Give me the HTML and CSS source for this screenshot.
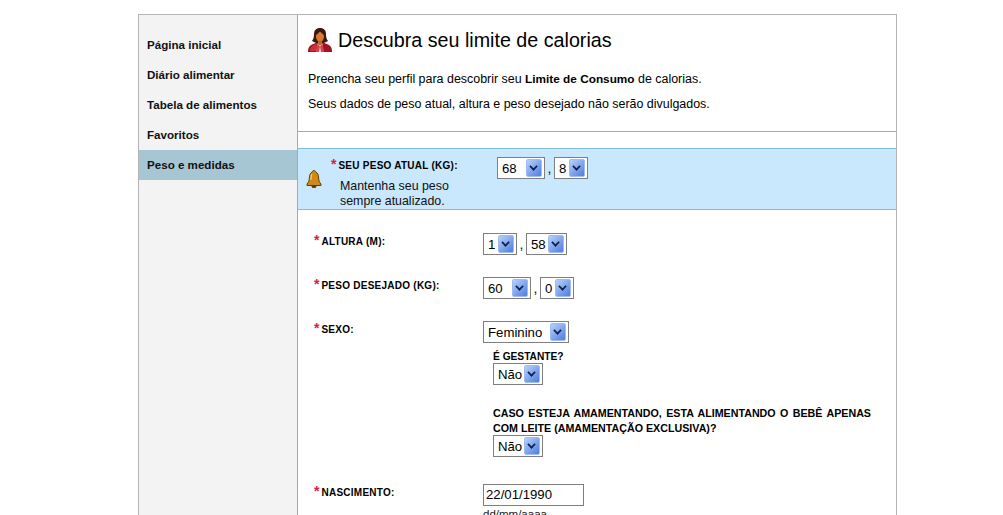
FILE: index.html
```html
<!DOCTYPE html>
<html lang="pt">
<head>
<meta charset="utf-8">
<title>Descubra seu limite de calorias</title>
<link rel="stylesheet" href="styles.css">
</head>
<body>
<div class="page">
  <nav class="side">
    <a class="item">Página inicial</a>
    <a class="item">Diário alimentar</a>
    <a class="item">Tabela de alimentos</a>
    <a class="item">Favoritos</a>
    <a class="item active">Peso e medidas</a>
  </nav>
  <main class="main">
    <header class="intro">
      <h1 class="title">
        <svg class="person" viewBox="0 0 24 24" width="24" height="24"><path d="M0 24c0-4 1-6 4-7.500l5-2h6l5 2c3 1.500 4 3.500 4 7.500z" fill="#a3141c"/><path d="M2 23c0-3 1-5 4-6l3-1 1 7z" fill="#c9303a"/><path d="M9.500 15.500h5l1 8.500h-7z" fill="#f1e4e0"/><path d="M9.500 15.500l2.500 3-1 5.500H8zM14.500 15.500L12 18.500l1 5.500h3z" fill="#d4434c"/><path d="M12 0C8 0 6 2.500 6 6c0 3-.5 5-2 7l4 2h8l4-2c-1.500-2-2-4-2-7 0-3.500-2-6-6-6z" fill="#3f1710"/><ellipse cx="12" cy="8.500" rx="4" ry="5.200" fill="#d77a32"/><path d="M10 12.500h4v3.500l-2 1.500-2-1.500z" fill="#bd6526"/><path d="M8 7c1.500-1 3-2.500 4-3.500 1 1 2.500 2.500 4 3.500l-.5-4h-7z" fill="#3f1710"/></svg>
        <span>Descubra seu limite de calorias</span>
      </h1>
      <p class="text">Preencha seu perfil para descobrir seu <b>Limite de Consumo</b> de calorias.</p>
      <p class="text">Seus dados de peso atual, altura e peso desejado não serão divulgados.</p>
    </header>
    <section class="band">
      <svg class="bell" viewBox="0 0 16 18" width="16" height="18"><path d="M8 .5c1 0 1.600.7 1.600 1.500C12 3 12.400 5 12.600 8c.2 3 1 4.500 2.400 6v1.500H1V14c1.400-1.500 2.200-3 2.400-6 .2-3 .6-5 3-6C6.400 1.200 7 .5 8 .5z" fill="#cf8a16" stroke="#5f3f06" stroke-width="1"/><path d="M6 4c-1 1-1 4-1.300 6" stroke="#f2cf6c" stroke-width="1.400" fill="none"/><ellipse cx="8" cy="16.500" rx="2.500" ry="1.500" fill="#5a3a08"/></svg>
      <div class="band-label">
        <div class="label"><span class="star">*</span>SEU PESO ATUAL (KG):</div>
        <div class="note">Mantenha seu peso<br>sempre atualizado.</div>
      </div>
      <div class="controls">
        <span class="select w48"><span class="val">68</span><i class="arrow"></i></span>
        <span class="comma">,</span>
        <span class="select w34"><span class="val">8</span><i class="arrow"></i></span>
      </div>
    </section>
    <form class="form">
      <div class="row">
        <div class="label"><span class="star">*</span>ALTURA (M):</div>
        <div class="controls">
          <span class="select w34"><span class="val">1</span><i class="arrow"></i></span>
          <span class="comma">,</span>
          <span class="select w41"><span class="val">58</span><i class="arrow"></i></span>
        </div>
      </div>
      <div class="row">
        <div class="label"><span class="star">*</span>PESO DESEJADO (KG):</div>
        <div class="controls">
          <span class="select w48"><span class="val">60</span><i class="arrow"></i></span>
          <span class="comma">,</span>
          <span class="select w34"><span class="val">0</span><i class="arrow"></i></span>
        </div>
      </div>
      <div class="row">
        <div class="label"><span class="star">*</span>SEXO:</div>
        <div>
          <span class="select w86"><span class="val">Feminino</span><i class="arrow"></i></span>
          <div class="sub">
            <div class="sublabel first">É GESTANTE?</div>
            <span class="select w50"><span class="val">Não</span><i class="arrow"></i></span>
            <div class="sublabel second">CASO ESTEJA AMAMENTANDO, ESTA ALIMENTANDO O BEBÊ APENAS COM LEITE (AMAMENTAÇÃO EXCLUSIVA)?</div>
            <span class="select w50"><span class="val">Não</span><i class="arrow"></i></span>
          </div>
        </div>
      </div>
      <div class="row birth">
        <div class="label"><span class="star">*</span>NASCIMENTO:</div>
        <div>
          <span class="input">22/01/1990</span>
          <div class="hint">dd/mm/aaaa</div>
        </div>
      </div>
    </form>
  </main>
</div>
</body>
</html>
```
FILE: styles.css
```css
html, body { margin: 0; padding: 0; background: #fff; }
body { height: 515px; overflow: hidden; font-family: "Liberation Sans", Arial, sans-serif; color: #111; }
.page { display: flex; width: 759px; height: 501px; box-sizing: border-box; margin: 14px 0 0 138px; border: 1px solid #b4b4b4; border-bottom: 0; overflow: hidden; }
.side { width: 158px; flex: none; padding-top: 15px; background: #f3f3f3; border-right: 1px solid #a8a8a8; }
.item { display: block; height: 30px; line-height: 30px; padding-left: 8px; font-size: 11.6px; font-weight: bold; color: #111; }
.item.active { background: #a7c6d4; }
.main { flex: 1; min-width: 0; }
.intro { height: 105px; border-bottom: 1px solid #a8a8a8; padding: 11px 0 0 10px; }
.title { display: flex; align-items: center; gap: 6px; margin: 0; height: 28px; font-size: 19.7px; font-weight: normal; color: #000; }
.person { flex: none; }
.text { margin: 0; font-size: 12.45px; line-height: 15px; color: #000; }
.text b { font-size: 11.8px; }
.title + .text { margin-top: 18px; }
.text + .text { margin-top: 10px; }
.band { display: flex; height: 60px; margin-top: 16px; background: #c9e7fd; border-top: 1px solid #7fbcd8; border-bottom: 1px solid #7fbcd8; }
.bell { flex: none; margin: 21px 0 0 8px; }
.band-label { width: 166px; flex: none; padding: 8px 0 0 9px; }
.band .controls { padding-top: 8px; }
.label { font-size: 10px; line-height: 14px; font-weight: bold; color: #000; letter-spacing: .25px; white-space: nowrap; }
.star { color: #d8203a; font-size: 14px; margin-right: 2px; letter-spacing: 0; }
.note { margin: 6px 0 0 9px; font-size: 12.4px; line-height: 15px; color: #111; }
.controls { display: flex; align-items: flex-start; }
.comma { width: 9px; height: 22px; text-align: center; font-size: 14px; line-height: 23px; }
.select { display: flex; align-items: center; justify-content: space-between; box-sizing: border-box; height: 22px; padding: 0 2px 0 4px; border: 1px solid #7f7f7f; background: #fff; font-size: 13.2px; color: #000; }
.arrow { display: block; position: relative; flex: none; width: 16px; height: 18px; border-radius: 2px; background: linear-gradient(135deg, #b7d2fa, #4f7de0); border: 1px solid #9dbcf2; box-sizing: border-box; }
.arrow::after { content: ""; position: absolute; left: 3px; top: 3px; width: 5px; height: 5px; border-right: 2.5px solid #10204a; border-bottom: 2.5px solid #10204a; transform: rotate(45deg) scale(.85); }
.w34 { width: 34px; }
.w41 { width: 41px; }
.w48 { width: 48px; }
.w50 { width: 50px; }
.w86 { width: 86px; }
.form { padding: 23px 0 0 16px; }
.row { display: grid; grid-template-columns: 169px 1fr; padding-bottom: 22px; }
.sub { padding-left: 10px; width: 378px; }
.sublabel { font-size: 10.7px; font-weight: bold; line-height: 15px; color: #000; text-align: justify; }
.sublabel.first { margin-top: 7px; height: 13px; line-height: 14px; font-size: 10.2px; }
.sublabel.second { margin-top: 21px; margin-bottom: -1px; }
.birth { padding-top: 5px; }
.input { display: block; box-sizing: border-box; width: 101px; height: 22px; line-height: 20px; padding-left: 2px; border: 1px solid #7f7f7f; font-size: 13.2px; color: #000; }
.hint { font-size: 11.5px; line-height: 13px; margin-top: 2px; color: #222; }
```
